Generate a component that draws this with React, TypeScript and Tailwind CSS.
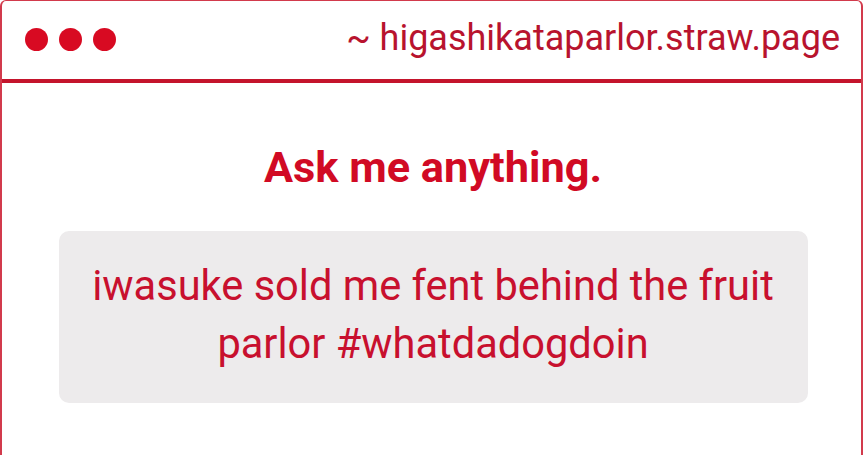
import React from "react";

export default function App() {
  return (
    <div className="w-[863px] h-[455px] bg-white overflow-hidden" style={{ fontFamily: "Roboto, 'Liberation Sans', sans-serif" }}>
      <div className="h-full border-x-2 border-t border-[#d23a4c] rounded-t-[6px] flex flex-col">
        <div className="h-[82px] flex items-center justify-between pl-[23px] pr-[21px] border-b-[4px] border-[#c4142c]">
          <div className="flex items-center gap-[11px] mt-[-2px]">
            <div className="w-[23px] h-[23px] rounded-full bg-[#d80a22]" />
            <div className="w-[23px] h-[23px] rounded-full bg-[#d80a22]" />
            <div className="w-[23px] h-[23px] rounded-full bg-[#d80a22]" />
          </div>
          <div className="text-[36px] text-[#b8132e] leading-none mt-[-4px]">~ higashikataparlor.straw.page</div>
        </div>
        <div className="flex flex-col items-center">
          <h1 className="mt-[63px] ml-[3px] text-[43.3px] font-bold text-[#d10a24] leading-none">Ask me anything.</h1>
          <div className="mt-[42px] w-[749px] h-[172px] ml-[3px] rounded-[10px] bg-[#edebec] flex items-center justify-center px-[20px] pb-[4px]">
            <p className="text-[41.6px] leading-[58px] text-[#c8102e] text-center">iwasuke sold me fent behind the fruit parlor #whatdadogdoin</p>
          </div>
        </div>
      </div>
    </div>
  );
}
